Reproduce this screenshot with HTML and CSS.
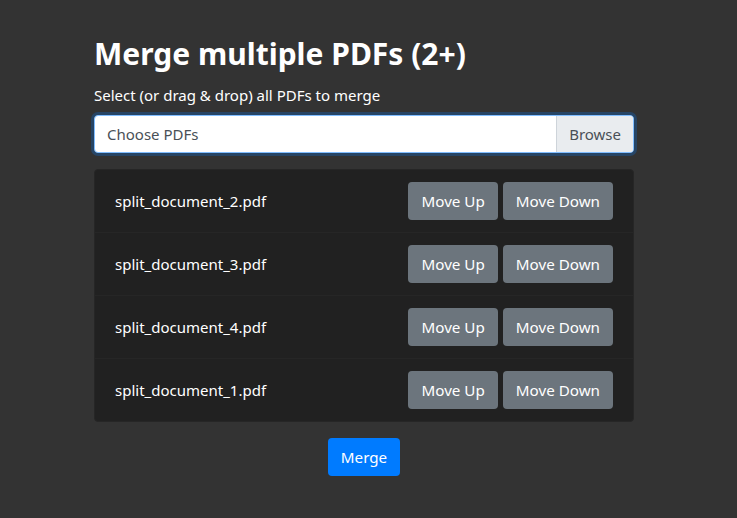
FILE: index.html
```html
<!DOCTYPE html>
<html lang="en">
<head>
<meta charset="utf-8">
<title>Merge PDFs</title>
<link rel="stylesheet" href="styles.css">
</head>
<body>
<main class="container">
  <h1 class="title">Merge multiple PDFs (2+)</h1>
  <p class="subtitle">Select (or drag &amp; drop) all PDFs to merge</p>
  <div class="file-input">
    <span class="file-label">Choose PDFs</span>
    <span class="browse">Browse</span>
  </div>
  <ul class="list">
    <li class="item"><span class="name">split_document_2.pdf</span><span class="actions"><button class="btn btn-secondary">Move Up</button><button class="btn btn-secondary">Move Down</button></span></li>
    <li class="item"><span class="name">split_document_3.pdf</span><span class="actions"><button class="btn btn-secondary">Move Up</button><button class="btn btn-secondary">Move Down</button></span></li>
    <li class="item"><span class="name">split_document_4.pdf</span><span class="actions"><button class="btn btn-secondary">Move Up</button><button class="btn btn-secondary">Move Down</button></span></li>
    <li class="item"><span class="name">split_document_1.pdf</span><span class="actions"><button class="btn btn-secondary">Move Up</button><button class="btn btn-secondary">Move Down</button></span></li>
  </ul>
  <div class="merge-row"><button class="btn btn-primary">Merge</button></div>
</main>
</body>
</html>
```
FILE: styles.css
```css
* { box-sizing: border-box; }
html, body { margin: 0; padding: 0; }
body {
  background: #333333;
  color: #ffffff;
  font-family: "Noto Sans", "Open Sans", sans-serif;
  font-size: 16px;
  line-height: 1.5;
  height: 518px;
}
.container {
  width: 540px;
  margin-left: 94px;
  padding-top: 36px;
}
.title {
  margin: 0;
  font-size: 30px;
  font-weight: 700;
  line-height: 36px;
}
.subtitle {
  margin: 13px 0 10px;
  font-size: 15px;
  line-height: 20px;
}
.file-input {
  display: flex;
  height: 38px;
  border: 1px solid #80bdff;
  border-radius: 4px;
  background: #ffffff;
  box-shadow: 0 0 0 3px rgba(0, 123, 255, 0.25);
  overflow: hidden;
  font-size: 15px;
}
.file-label {
  flex: 1;
  padding: 0 12px;
  line-height: 36px;
  color: #495057;
}
.browse {
  padding: 0 12px;
  line-height: 36px;
  color: #495057;
  background: #e9ecef;
  border-left: 1px solid #ced4da;
}
.list {
  list-style: none;
  margin: 16px 0 0;
  padding: 0;
  background: #212121;
  border-radius: 4px;
  border: 1px solid #262626;
}
.item {
  display: flex;
  align-items: center;
  justify-content: space-between;
  padding: 12px 20px;
  border-top: 1px solid #262626;
}
.item:first-child { border-top: none; }
.name { font-size: 15px; }
.actions { display: flex; gap: 5px; }
.btn {
  font-family: inherit;
  font-size: 15.2px;
  line-height: 24px;
  padding: 6px 12px;
  border: 1px solid transparent;
  border-radius: 4px;
  color: #ffffff;
  cursor: pointer;
}
.btn-secondary { background: #6c757d; }
.btn-primary { background: #007bff; }
.merge-row {
  display: flex;
  justify-content: center;
  margin-top: 16px;
}
```
